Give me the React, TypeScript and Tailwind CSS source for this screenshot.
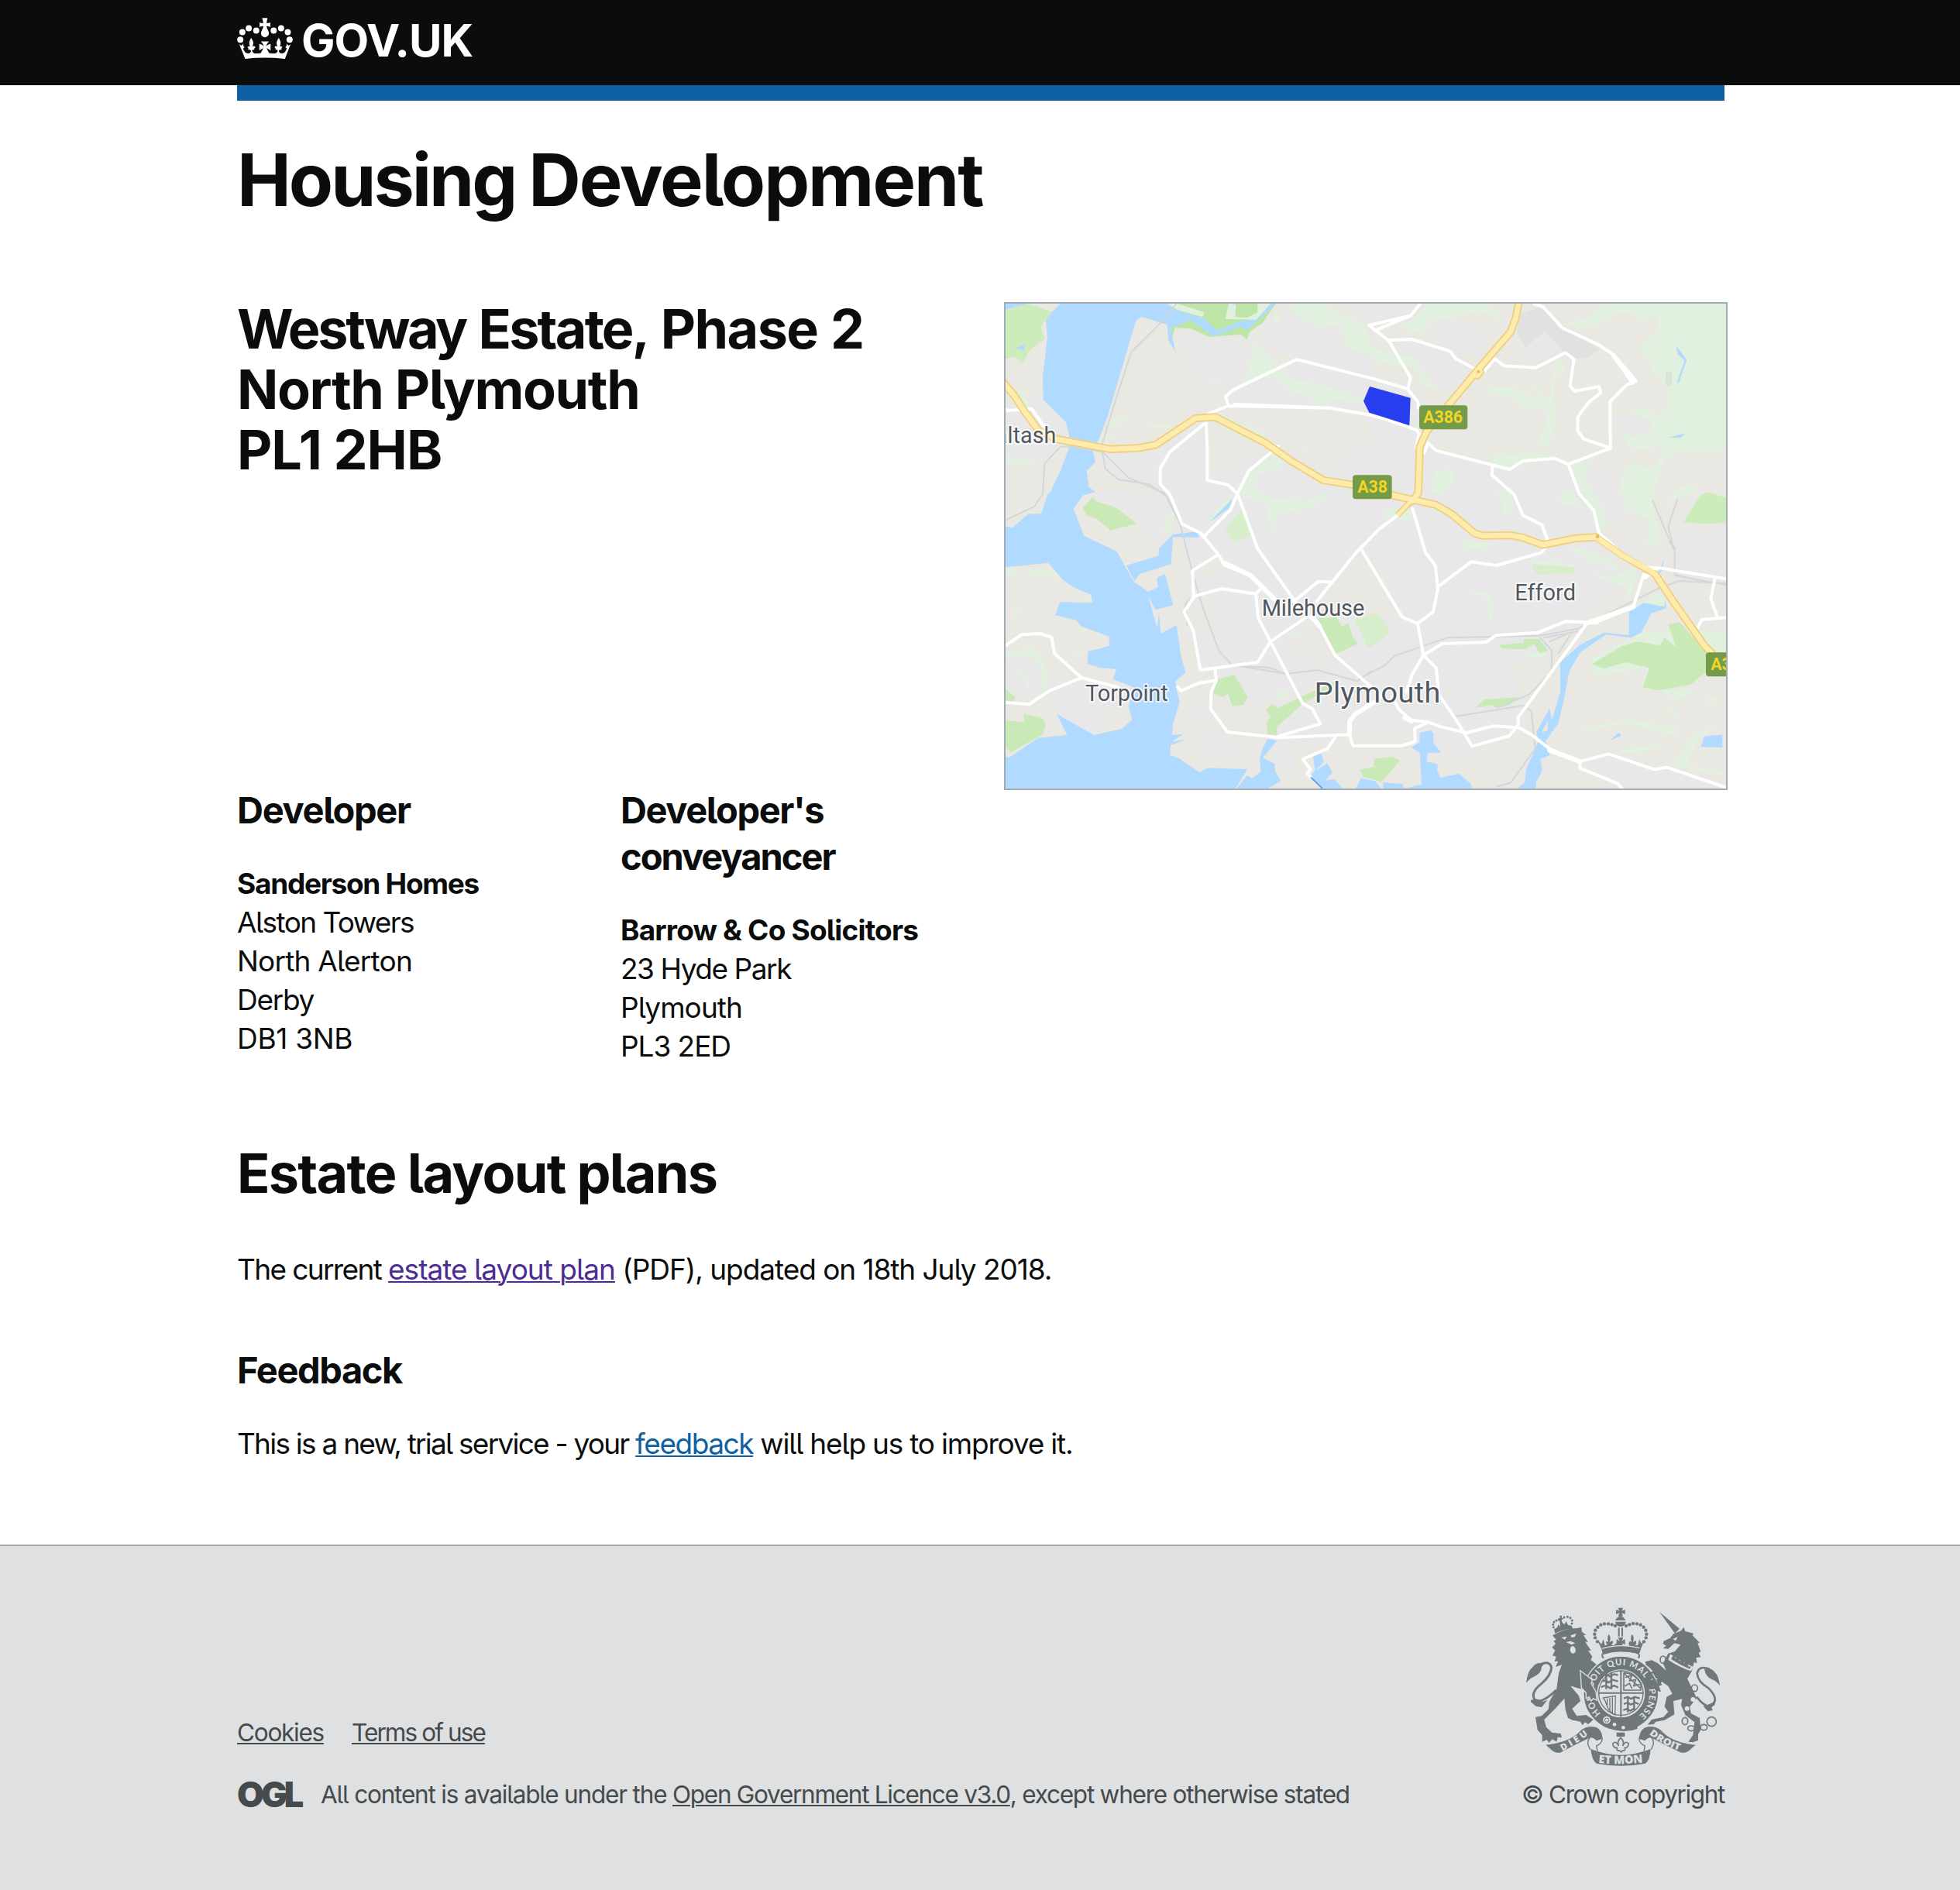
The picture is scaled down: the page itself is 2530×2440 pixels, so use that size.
const FONT = "font-['Inter','Liberation_Sans',sans-serif] [font-feature-settings:'cv05']";

function Crown() {
  return (
    <svg viewBox="48 68 216 160" className="h-[53px] w-[72px]" fill="#fff">
      {[[60, 153], [68, 124], [93, 109], [122, 118], [190, 118], [219, 109], [245, 124], [252, 153]].map(([x, y]) => (
        <circle key={x} cx={x} cy={y} r={12} />
      ))}
      <path d="M145 69H166L162 88Q170 90 177 85V105Q169 99 162 101Q163 108 168 116Q174 128 169 137Q163 144 156 144Q148 144 143 137Q138 128 144 116Q149 108 150 101Q142 99 135 105V85Q142 90 150 88Z" />
      <path d="M56 171L64 177 72 168Q70 178 77 183L71 187Q76 205 90 207Q101 206 102 196Q96 190 91 193Q94 187 88 182Q91 178 98 179Q92 166 97 156L102 146 108 156Q114 166 107 179Q116 177 119 183Q113 187 114 193Q108 190 106 196Q109 207 120 207Q130 207 140 205L150 186 134 195V169Q144 172 152 178Q149 168 140 160H172Q163 168 160 178Q168 172 178 169V195L162 186 172 205Q182 207 194 207Q203 206 206 196Q204 190 198 193Q199 187 193 183Q196 177 205 179Q198 166 204 156L210 146 215 156Q220 166 214 179Q221 178 224 182Q218 187 221 193Q216 190 210 196Q211 206 222 207Q236 205 241 187L235 183Q242 178 240 168L248 177 256 171L234 228Q156 219 79 228Z" />
    </svg>
  );
}

const SHIELDS = [
  { x: 1368, y: 700, w: 152, label: "A38", tx: 1387, tw: 116 },
  { x: 1626, y: 430, w: 187, label: "A386", tx: 1642, tw: 152 },
  { x: 2736, y: 1387, w: 152, label: "A38", tx: 2755, tw: 116 },
];

const LABELS = [
  { text: "Saltash", x: -67, y: 575, size: 86, w: 287 },
  { text: "Torpoint", x: 333, y: 1575, size: 87, w: 320 },
  { text: "Milehouse", x: 1016, y: 1245, size: 87, w: 398 },
  { text: "Efford", x: 1996, y: 1186, size: 87, w: 236 },
  { text: "Plymouth", x: 1220, y: 1580, size: 113, w: 488 },
];

/* Land, coast and water outlines, in units of a third of a pixel. */
function MapLand() {
  return (
    <>
      <rect x="0" y="0" width="2850" height="1950" fill="#eae8e2" />
      <g fill="#e8e8e8">
        <path d="M24 440L150 405 170 410 258 495 262 590 235 600 175 660 24 640Z" />
        <path d="M690 165L760 145 880 180 980 215 960 320 870 380 780 350 725 280Z" />
        <path d="M400 605L610 590 760 490 800 500 805 690 860 690 960 640 1100 600 1250 700 1440 560 1410 440 890 440 876 396 1150 255 1440 320 1590 366 1630 440 1620 560 1700 610 1980 680 2200 650 2330 930 2330 1000 2430 1120 2260 1240 2080 1400 2000 1500 2060 1650 1990 1700 1800 1790 1600 1790 1590 1700 1350 1710 1140 1750 1140 1880 1070 1820 1050 1720 880 1690 850 1480 770 1450 745 1220 750 1080 620 740 460 717Z" />
        <path d="M1020 200L1040 90 1150 60 1250 140 1330 130 1330 210 1440 240 1440 320 1150 240Z" />
        <path d="M370 775L450 750 600 780 690 870 640 930 580 955 530 890Z" />
        <path d="M190 1540L315 1490 520 1522 500 1595 410 1620 410 1690 367 1707 222 1625Z" />
        <path d="M40 1420H160L180 1560 40 1540Z" />
        <path d="M790 1690L900 1720 925 1790 860 1820 800 1780Z" />
        <path d="M700 1640L760 1560 830 1600 850 1650Z" />
      </g>
      <g fill="#e8e8e8" transform="translate(1410 0)">
        <path d="M-60 36H210L180 80 20 120Z" />
        <path d="M110 185L190 175 330 222 430 290 345 385 290 370 240 290 200 240Z" />
        <path d="M280 100L380 95 470 160 440 240 330 215 280 170Z" />
        <path d="M950 480L1060 450 1120 500 1060 560 990 530Z" />
        <path d="M860 670L960 700 1030 830 1000 880 930 870Z" />
        <path d="M900 60L990 45 960 80 850 125 790 110Z" />
        <path d="M1210 920L1404 915V1100L1210 1080Z" />
        <path d="M700 145L790 240 640 240 600 225Z" />
        <path d="M838 1815L950 1790 1404 1905V1913H990Z" />
      </g>
      <g fill="#eae8e2">
        <path d="M745 1070L850 1010 905 1060 800 1100ZM770 1190L830 1170 850 1310 760 1320Z" />
        <path d="M1100 1340L1230 1270 1300 1398 1230 1430 1160 1410ZM1290 1115L1450 990 1560 1240 1230 1240Z" />
        <path d="M960 1590L1040 1570 1040 1700 880 1690 860 1620ZM1970 1440L2080 1420 2090 1480 1980 1500Z" />
      </g>
      <path fill="#e1e1e1" d="M2015 80L2100 45 2180 130 2325 212 2270 250 2210 245 2110 145 2040 205 2005 150Z" />
      <g fill="#e2f0df">
        <path d="M50 368L90 372 125 450 60 440Z" />
        <path d="M24 627L122 640 118 668 24 650Z" />
        <path d="M425 490L490 468 488 482 415 525Z" />
        <path d="M405 530L445 560 390 572Z" />
        <path d="M560 508L665 506 668 518 560 516Z" />
        <path d="M968 180L1040 225 1065 270 1120 310 1125 328 1250 350 1340 385 1440 405V430L1275 400 1270 435 1220 432 1210 400 1120 375 1080 325 1020 320 900 375 960 320 980 215Z" />
        <path d="M822 335L860 325 828 362Z" />
        <path d="M1140 36H1260L1330 85 1420 120 1440 230 1400 225 1335 200 1330 130 1290 115 1250 135 1140 70Z" />
        <path d="M1075 62L1090 105 1060 105Z" />
        <path d="M880 480L1000 520 1080 590 1040 590 935 550 870 520Z" />
        <path d="M1070 600L1110 620 1080 680 985 700 1020 720 970 730 1050 790 1180 800 1270 770 1260 795 1200 825 1070 855 1068 920 1040 880 1040 815 950 785 925 770 965 685Z" />
        <path d="M1175 588L1195 585 1185 620Z" />
        <path d="M900 790L820 888 805 880 880 800Z" />
        <path d="M690 830L660 920 630 925 655 860Z" />
        <path d="M24 1065L70 1060 70 1090 24 1085ZM110 1065H210L245 1112 200 1090 110 1088ZM310 1185L350 1165 358 1190Z" />
        <path d="M55 1225L90 1222 50 1255ZM310 1288L360 1312 310 1302ZM285 1382L335 1380 335 1395 285 1393Z" />
        <path d="M24 1395L130 1362 180 1440 185 1560 165 1540 160 1440 120 1400 24 1410ZM45 1465L100 1470 125 1520 110 1525 90 1485Z" />
        <path d="M1075 1545L1115 1530 1118 1555 1085 1572ZM1110 1320L1160 1308 1158 1325Z" />
      </g>
      <g fill="#e2f0df" transform="translate(1410 0)">
        <path d="M930 36H1404V605H1220L1165 640 1145 700 1120 790 1125 860 1155 940 1130 970 1095 980 1110 870 1020 840 990 720 1040 655 1120 680 1165 610 1150 580 1100 600 1030 595 990 530 1060 560 1120 520 1110 490 1035 455 1095 438 1130 475 1180 430 1175 340 1110 295 1125 260 1078 225 1085 190 1145 140 1138 88 1095 85 1075 120 1050 75 980 72 860 135 770 112 860 95Z" />
        <path d="M250 36H480L540 98 440 65 330 95 250 90 240 155 150 130Z" />
        <path d="M0 190L100 230 190 240 240 310 285 375 230 350 200 285 60 260 0 220Z" />
        <path d="M745 235L785 295 745 310 735 420 750 480 710 600 675 560 710 510 715 445 620 445 590 400 490 385 480 355 600 365 680 415 650 320 690 390 720 400Z" />
        <path d="M505 618L600 622 640 605 690 618 740 625 660 640 618 645 566 678 500 660ZM793 658L905 625 860 670 870 740 930 820 945 920 900 880 835 772Z" />
        <path d="M285 680L350 675 350 725 300 780 255 760ZM510 750L570 760 575 830 535 865 545 810ZM770 750L830 790 860 830 760 810ZM90 830L190 840 180 878 80 865Z" />
        <path d="M370 950L480 960 490 990 400 985ZM1210 750L1280 735 1290 760 1200 800 1170 860Z" />
        <path d="M700 1030L820 1050 815 1080 610 1032ZM780 970L900 1000 1000 1060 960 1055 850 1020ZM855 1080L960 1095 1060 1050 1050 1120 1030 1190 1010 1130 930 1105Z" />
        <path d="M410 1155L485 1155 505 1230 490 1275 475 1170 410 1168ZM620 1392L710 1390 700 1405 630 1405Z" />
        <path d="M880 1410L1080 1310 1270 1300 1404 1310V1380L1300 1480 1140 1535 1270 1530 1265 1550 1210 1572 1140 1535 1075 1525 1100 1450 890 1475Z" />
        <path d="M850 1680L1030 1645 1210 1680 1225 1715 1030 1660 850 1690ZM980 1770L1180 1735 1100 1765 980 1785ZM1200 1825L1280 1700 1404 1665 1300 1715 1250 1825 1404 1850V1865L1240 1835ZM1160 1590L1210 1610 1215 1645ZM1285 1575L1370 1560 1370 1580Z" />
        <path d="M1070 1190L1165 1150 1165 1210Z" />
      </g>
      <g fill="#c9e9b6">
        <path d="M24 62L110 36 205 68 160 125 176 172 118 215 90 266 62 242 24 250Z" fill="#cdecbb" />
        <path d="M680 36H1070L1020 110 970 145 958 176 935 155 815 165 740 132 680 130 662 190 650 118 560 90 545 85Z" fill="#bde5a8" />
        <path d="M648 36H690L795 70 788 88 690 60ZM888 36L916 38 914 88 960 90 1000 70V36H1062L995 98 875 95Z" fill="#e2f0df" />
        <path d="M363 782L372 800 450 825 533 888 430 914 378 870 340 858 322 828Z" />
        <path d="M940 830L975 935 905 960 875 905Z" fill="#d6eecb" />
        <path d="M24 1530L62 1560 55 1580 24 1575ZM24 1650L98 1658 93 1625 165 1640 180 1668 165 1708 45 1772 24 1755Z" />
        <path d="M830 1495L910 1473 962 1560 945 1590 903 1596 885 1545 865 1560 828 1545Z" />
        <path d="M1055 1585L1075 1603 1230 1530 1300 1500 1290 1520 1175 1585 1075 1675 1075 1708 1040 1705 1033 1660 1052 1637 1033 1610Z" />
        <path d="M1232 1255L1305 1250 1325 1285 1352 1275 1370 1330 1390 1352 1303 1392Z" />
        <path d="M1375 1262L1455 1235 1490 1260 1512 1315 1430 1370Z" fill="#d6eecb" />
        <path d="M1395 1842L1450 1830 1450 1800 1520 1790 1552 1805 1480 1888 1410 1868Z" />
      </g>
      <g fill="#c9e9b6" transform="translate(1410 960)">
        <path d="M652 92L660 85 818 98V122L672 125Z" fill="#d6eecb" />
        <path d="M522 398L620 390 620 375 680 374 715 420 680 428 662 392 630 415 540 412ZM432 642L470 608 612 600 560 632 512 643 500 630Z" />
        <path d="M885 472L1000 403 1060 385 1150 400 1165 370 1210 405 1180 318 1225 310 1330 430V500L1265 552 1140 574 1082 562 1107 487 1015 465 930 490Z" />
        <path d="M1240 -78L1305 -183 1340 -193 1404 -173V-76L1320 -71Z" fill="#cdecbb" />
      </g>
      <g fill="#b0daff">
        <path d="M24 36H110L24 60ZM235 36L205 68 180 100 186 165 168 320 170 408 258 495 270 548 268 600 238 680 195 770 188 772 162 850H112L52 903 24 898V1057L190 1040 245 1105 285 1133 355 1163 360 1195 234 1192 217 1243 300 1263 315 1285 425 1325V1362L343 1383 341 1430 385 1445 453 1452 440 1490 520 1522 500 1595 514 1647 475 1682 367 1707 222 1625 262 1707 150 1718 40 1793 24 1792V1913H915L960 1840 808 1834 775 1851 697 1798 661 1785 663 1747 720 1725 668 1732 712 1704 668 1706 672 1665 698 1580 680 1500 721 1465 703 1400 686 1280 626 1314 618 1235 611 1292 575 1165 605 1222 673 1204 642 1083 610 1097 614 1135 576 1152 520 1112 455 997 380 960 328 935 287 830 325 778 372 765 347 747 338 685 372 650 360 600 382 568 420 470 470 300 530 98 555 86 650 118 655 180 682 222 662 130 740 100 830 162 930 125 960 138 1070 36H1050L995 98 930 105 845 142 795 95 690 62 650 36Z" />
        <path d="M492 1050L617 1012V985L672 930 768 918 772 942 672 940 665 1045 545 1082 522 1110ZM62 208L102 193 95 219ZM810 885L905 790 890 828Z" />
        <path d="M1040 1722L1075 1728 1020 1795 1065 1818 1068 1848 1090 1885 1040 1913H920L960 1862 978 1874 1012 1850 1008 1800 1020 1755Z" />
        <path d="M1215 1788L1245 1778 1257 1810 1225 1845 1270 1816 1290 1852 1262 1882 1298 1878 1328 1913H1250L1205 1865 1222 1843ZM1380 1913L1400 1875 1455 1885 1478 1913ZM1486 1890L1562 1897 1566 1913H1486Z" />
      </g>
      <g fill="#b0daff" transform="translate(1410 960)">
        <path d="M218 738L262 728 272 745 270 775 300 815H250L245 850 288 860 285 885 298 912 370 897 415 935 420 953H160L225 938 218 815 185 795 218 775Z" />
        <path fillRule="evenodd" d="M598 953L625 930 630 880 665 800 678 765 670 735 720 645 730 690 762 580V465L835 400 930 350 1028 360V270L1085 235 1165 250 1170 225 1172 255 1115 275 1075 350 1035 370 940 358 840 425 797 500 778 600 755 700 705 770 722 825 685 840 692 885 668 930V953ZM715 690L690 735 712 730Z" />
        <path d="M1165 65L1135 132 1155 112ZM955 767L990 737 998 750ZM1320 752L1390 745V795L1307 793ZM1210 -762L1252 -705 1220 -615 1215 -620 1243 -703 1218 -728ZM1183 -405L1248 -423 1225 -404Z" />
      </g>
      <rect x="2580" y="300" width="24" height="54" fill="#dae6d5" />
    </>
  );
}

function MapLines() {
  return (
    <g fill="none" strokeLinejoin="round" strokeLinecap="round">
      <g stroke="#d4d7da" strokeWidth="6">
        <path d="M685 36L640 95 510 225 450 410 395 590 410 675 460 717 580 735 650 785 700 890 750 1085 790 1220 850 1380 900 1435 1110 1470 1230 1455 1385 1498 1440 1460" />
        <path d="M24 875L135 822 168 775 175 655 235 592 262 588 400 610 500 710 640 770 690 870M910 1440L1040 1445 1110 1470M735 1180L720 1200 728 1280" />
        <g transform="translate(1410 960)">
          <path d="M0 520L85 475 120 440 325 370 680 362 830 335 1140 180 1220 150 1404 160M355 675L620 632 650 655 665 800 570 932 520 945M680 365L730 420 728 490M760 470L640 590 520 640M700 370L830 345M720 385L800 350M755 430L800 360M1185 0L1205 20V125L1330 155M1210 130L1404 165M1120 -160L1200 25M1215 -165L1180 -60 1200 20" />
        </g>
      </g>
      <g stroke="#fff" strokeWidth="12">
        <path d="M24 447L35 450 125 443 175 515M810 462L885 432 1280 440 1440 468 1500 485 1615 525 1630 545M910 425L1280 440M887 430L876 396 905 370 1152 252 1440 325 1582 366" />
        <path d="M800 490L805 600V720L885 738 922 772 1000 985 1145 1190M1080 588L965 685 922 772 895 835 790 940M795 500L660 610 623 675V735L660 775 708 890 780 925 850 1010 870 1048 975 1090 1070 1180" />
        <path d="M845 1010L748 1070 752 1170 860 1140 993 1160 1015 1138M752 1175L715 1230 752 1305 778 1455 1000 1425 1050 1345 1190 1250M993 1160L1003 1255 1050 1345 1175 1585 1212 1605 1243 1663 1080 1712" />
        <path d="M835 1450L840 1495 820 1540 818 1605 883 1695 1085 1717 1355 1705 1370 1748H1560L1610 1732 1608 1682 1655 1660" />
        <path d="M690 1520L703 1535 775 1505 840 1495M24 1360L85 1318 157 1314 202 1328 213 1390 318 1485 460 1522M24 1580L115 1588 195 1535 318 1485" />
        <path d="M1140 1190L1235 1112 1290 1115M1228 1190L1380 1002 1470 910 1540 857M1210 1250L1235 1275 1300 1398 1440 1520 1480 1560M1400 985L1560 1250 1620 1275 1680 1230 1698 1140 1688 1050 1650 1000 1600 830" />
        <path d="M1300 1717L1270 1760 1175 1800 1205 1840 1192 1855 1208 1872" />
        <g transform="translate(1410 0)">
          <path d="M220 36L183 82 22 120 98 180 182 322 172 368 212 418V440M45 140L183 82M98 178L187 174 335 220 358 250 435 290" />
          <path d="M470 295L508 250 545 277 667 284 783 226 815 252 800 355 818 375 912 357 918 382 870 420 830 475V530L853 560 958 596" />
          <path d="M660 36L695 48 770 130 910 195 970 235 1055 335 1020 350 955 415 956 596 793 658 740 635 618 645 566 678 280 605 250 575 235 615M970 235L1040 345 1055 335M215 540L205 590" />
          <path d="M500 665L497 700 583 775 618 857 690 892 718 965 690 1000 515 1050 417 1036 288 1132M793 658L835 772 892 837 912 925 985 990" />
        </g>
        <g transform="translate(1410 960)">
          <path d="M210 315L232 437 282 488 292 590 360 690 420 790 565 750 600 705 598 680 865 315 905 308 1045 250 1085 125M232 437L190 510 165 580M232 437L305 393 475 387 512 361 675 350 782 307 905 312" />
          <path d="M110 600L140 650 185 690 245 695 300 715 400 738 500 712 600 718 650 745 720 800 835 850 950 820 1125 880 1175 872 1404 950M838 850V875L985 935 1000 953" />
          <path d="M1085 97L1145 100 1404 142M1360 145L1345 218 1370 290M1404 292L1310 300 1290 340" />
        </g>
      </g>
      <g stroke="#fff" strokeWidth="18">
        <path d="M1450 1580L1375 1628 1356 1655V1705M870 1040L975 1090 1065 1180M1210 1250L1240 1285M2270 1275L2455 1210M2500 1095L2540 1065" />
        <path d="M2130 1765L2245 1808M1570 1640L1596 1652M2380 240L2450 330" />
      </g>
      <g stroke="#f0d07c" strokeWidth="31">
        <path d="M10 335L60 395 95 450 150 525 220 560 430 600 540 595 605 583 760 480 835 475 1030 575 1130 645 1255 720 1370 738 1520 778 1600 795 1690 815 1750 850 1840 925 1870 935 1980 933 2030 943 2105 970 2230 945 2310 940" />
        <path d="M2012 30L2000 90 1980 145 1855 290 1755 410 1655 530 1628 590 1622 770 1600 800M1862 300L1850 315M2540 1085L2610 1190 2730 1360 2760 1390" />
      </g>
      <path stroke="#f0d07c" strokeWidth="24" strokeLinecap="butt" d="M1600 795L1541 856" />
      <path stroke="#f0d07c" strokeWidth="26" d="M2310 940L2410 1010 2540 1085" />
      <g stroke="#fdecae" strokeWidth="20">
        <path d="M10 335L60 395 95 450 150 525 220 560 430 600 540 595 605 583 760 480 835 475 1030 575 1130 645 1255 720 1370 738 1520 778 1600 795 1690 815 1750 850 1840 925 1870 935 1980 933 2030 943 2105 970 2230 945 2310 940 2410 1010 2520 1070 2540 1085 2610 1190 2730 1360 2760 1390" />
        <path d="M2012 30L2000 90 1980 145 1855 290 1755 410 1655 530 1628 590 1622 770 1600 800M1862 300L1850 315" />
      </g>
      <path stroke="#fdecae" strokeWidth="14" strokeLinecap="butt" d="M1600 795L1541 856" />
      <circle cx="1855" cy="299" r="6" fill="#e7bd57" />
      <circle cx="2316" cy="938" r="7" fill="#e7bd57" />
      <path stroke="#6f9ee8" strokeWidth="6" d="M1208 1872L1250 1913" />
    </g>
  );
}

function EstateMap() {
  return (
    <svg viewBox="24 36 2790 1878" className="block h-[626px] w-[930px]" fontFamily="Roboto, sans-serif">
      <MapLand />
      <MapLines />
      <path fill="#293fef" d="M1410 413L1434 357 1592 401 1588 508 1432 458Z" />
      {SHIELDS.map((s) => (
        <g key={s.x}>
          <rect x={s.x} y={s.y} width={s.w} height="93" rx="12" fill="#739b4a" />
          <text x={s.tx} y={s.y + 69} textLength={s.tw} fontSize="64" fontWeight="700" fill="#f2d626">{s.label}</text>
        </g>
      ))}
      {LABELS.map((l) => (
        <text key={l.text} x={l.x} y={l.y} textLength={l.w} fontSize={l.size} fill="#50575f" stroke="#fff" strokeOpacity="0.75" strokeWidth="12" strokeLinejoin="round" paintOrder="stroke">{l.text}</text>
      ))}
    </svg>
  );
}

const CROWN_BEADS = [[366, 178], [357, 163], [355, 149], [358, 134], [367, 122], [379, 113], [393, 109], [408, 109], [422, 112], [435, 117], [477, 117], [490, 112], [504, 108], [519, 109], [533, 113], [545, 122], [553, 134], [556, 149], [554, 163], [546, 178]];
const LION_BEADS = [[196, 122], [194, 112], [198, 102], [207, 96], [217, 93], [237, 84], [250, 82], [261, 86], [268, 96], [267, 108]];

function Crest() {
  return (
    <svg viewBox="90 45 750 618" className="h-[206px] w-[250px]" fill="#6f777b">
      {/* royal crown */}
      {CROWN_BEADS.map(([x, y]) => <circle key={`${x}-${y}`} cx={x} cy={y} r="6.5" />)}
      <path d="M446 47H465L460 59 473 54V72L460 67 465 80H446L451 67 438 72V54L451 59ZM435 96Q440 82 455 80Q470 82 475 96ZM435 101H476Q474 118 455 120Q437 118 435 101ZM446 124H452V158H446ZM459 124H465V158H459Z" />
      <path d="M366 172L382 188 388 168 394 190Q398 196 404 190 396 182 402 176L408 180Q402 160 410 150Q420 160 413 180L424 174Q430 182 420 190Q428 196 434 188L440 184V168L452 176 446 162H466L460 176 473 168V190L460 184 466 194H490Q484 182 492 176L498 180Q492 160 500 150Q510 160 504 180L514 174Q520 184 512 190Q520 196 524 188L528 168 536 186 548 172 534 206Q532 220 526 226Q455 206 388 228Q384 216 382 208Z" />
      <path d="M384 205Q455 184 530 203" fill="none" stroke="#dee0e2" strokeWidth="4" />
      <path d="M390 242Q376 226 396 220Q455 206 516 220Q536 228 524 242" fill="none" stroke="#6f777b" strokeWidth="6" />

      {/* lion */}
      {LION_BEADS.map(([x, y]) => <circle key={`${x}-${y}`} cx={x} cy={y} r="4.5" />)}
      <path d="M219 78L228 77 227 86 236 88 227 94 230 104 238 112 245 100 252 114 266 116 271 128Q236 128 202 146L198 130 210 124 214 112 222 120 220 96 214 88 222 86Z" />
      <path d="M192 154Q240 126 288 126L304 122 306 140 322 152 312 154 330 180 318 178 342 214 330 212 346 236 340 248 366 270 352 280 350 296 336 320 342 330 336 352 306 362 270 352 262 350 294 388 300 408 268 438 286 466 322 462 350 480 340 490 330 498 318 490 308 502 300 488 270 482 252 474 242 442 238 398 200 440 160 480 168 510 190 530 224 534 228 550 212 548 208 566 192 556 178 570 170 558 152 566 152 540 134 520 126 470 150 466 176 440 180 410 208 360 216 300 228 268 204 276 214 254 200 254 206 236 192 232 202 212 190 200 204 186 196 176 206 170Z" />
      <path d="M146 266Q180 250 188 278Q186 310 150 340Q104 376 124 404Q150 420 206 366" fill="none" stroke="#6f777b" strokeWidth="9" />
      <path d="M160 264Q130 254 114 278 96 290 90 338 106 318 120 314 150 300 150 276ZM108 404L130 400 156 410 172 404 150 432 128 428 108 412Z" />
      <g fill="#dee0e2">
        <path d="M226 162L248 158 240 170ZM262 154L284 146 278 160 266 162Z" />
        <path d="M262 200Q272 188 280 204Q286 222 270 224Q256 218 262 200ZM244 180L262 176 280 184 266 190Z" />
      </g>

      {/* unicorn */}
      <path d="M606 63L684 128 666 146Z" />
      <path d="M660 148L690 136 700 122 706 138 738 146 734 154 762 182 754 184 766 216 758 222 766 238 748 240 752 262 740 258 732 292 714 322 728 350 750 396 724 430 728 456 762 474 766 520 756 536 756 560 736 568 718 566 736 540 742 490 706 462 690 424 694 400 660 408 664 460 626 482 592 488 584 498 560 500 576 480 622 470 640 450 626 430 634 392 656 380 640 350 616 334 600 342 610 372 590 366 584 346 586 330 600 322 570 316 550 340 546 316 570 300 592 294 556 270 550 256 576 250 600 262 632 290 620 262 640 224 666 216 688 190 664 184 640 206 620 204 632 194 620 186 622 176 648 164Z" />
      <path d="M648 226Q690 256 738 276L728 292Q680 276 640 248Z" fill="#dee0e2" />
      <path d="M656 236L664 232 668 244 678 240 684 252 696 248 702 262 712 258 720 276 728 272 724 284Q684 268 652 246Z" />
      <path d="M658 168L676 160 670 174Z" fill="#dee0e2" />
      <path d="M800 284Q758 268 752 302Q756 336 796 358Q838 400 810 424Q788 440 750 392" fill="none" stroke="#6f777b" strokeWidth="8" />
      <path d="M780 284Q806 276 820 296 836 310 840 348 824 328 808 324 784 312 780 284ZM776 428L800 420 822 408 820 424 808 432 812 444 794 448Z" />
      <g fill="none" stroke="#6f777b" strokeWidth="5">
        <ellipse cx="620" cy="248" rx="11" ry="14" /><ellipse cx="742" cy="358" rx="12" ry="13" /><ellipse cx="705" cy="486" rx="11" ry="14" />
        <ellipse cx="729" cy="514" rx="13" ry="10" /><ellipse cx="778" cy="510" rx="13" ry="11" /><circle cx="808" cy="488" r="18" />
      </g>
      <g fill="#dee0e2"><circle cx="736" cy="402" r="9" /><circle cx="713" cy="437" r="9" /></g>

      {/* garter and shield */}
      <circle cx="457" cy="379" r="147" fill="#dee0e2" />
      <circle cx="457" cy="379" r="118" fill="none" stroke="#6f777b" strokeWidth="50" />
      <circle cx="457" cy="377" r="86" fill="none" stroke="#6f777b" strokeWidth="4" />
      <defs>
        <path id="garter" d="M379 457A110 110 0 0 1 457 269A110 110 0 0 1 519 470" />
        <path id="motto-left" d="M230 602Q290 572 336 534" />
        <path id="motto-mid" d="M370 648Q456 656 544 646" />
        <path id="motto-right" d="M566 536Q620 580 696 604" />
      </defs>
      <text fontFamily="Lato, sans-serif" fontWeight="700" fontSize="34" fill="#dee0e2"><textPath href="#garter" textLength="530">HONI SOIT QUI MAL Y PENSE</textPath></text>
      <path d="M300 290L346 326 342 340 360 372 364 406 350 398 342 408 334 392 322 398 322 376 304 358Z" stroke="#dee0e2" strokeWidth="4" />
      <path d="M556 270L600 296 568 304 566 330 590 322 598 340 610 334 616 346 604 350 612 372 590 366 578 340 556 344 556 310 580 292 550 262Z" />
      <path d="M370 377H545M457 290V470" stroke="#6f777b" strokeWidth="6" />
      <g stroke="#6f777b" strokeWidth="7" fill="none" strokeLinejoin="round">
        <path d="M396 312L404 306 416 314 430 304 446 308M386 332L396 328 410 336 424 326 446 332M380 354L398 348 414 358 430 348 446 356M420 296V362M400 312V362" />
        <path d="M468 398L484 392 496 400 510 392 530 398M468 420L482 414 496 422 512 414 526 420M466 444L480 438 494 446 506 438 514 442M484 390V452M508 390V442" />
        <path d="M468 300L534 360M474 316L500 308 490 330 514 326 506 350 530 344M472 350L490 340 500 360M468 298V366H534V336M468 298Q510 300 534 340" strokeWidth="5" />
        <path d="M388 396L436 388 434 462Q408 448 402 424Q398 406 388 396ZM404 398V424M414 396V444M424 394V454" strokeWidth="4" />
      </g>
      <path d="M392 478Q450 514 524 492L520 516Q458 540 388 502Z" />
      <circle cx="402" cy="482" r="17" fill="#dee0e2" stroke="#6f777b" strokeWidth="5" />
      <circle cx="402" cy="482" r="8" fill="none" stroke="#6f777b" strokeWidth="3" />
      <g fill="#dee0e2"><circle cx="432" cy="499" r="7" /><circle cx="466" cy="511" r="7" /></g>

      {/* motto scroll */}
      <path d="M166 578Q260 570 304 520Q330 500 362 510Q384 520 386 554L362 562Q350 548 338 550Q290 572 222 608Q200 612 180 590Z" />
      <path d="M746 578Q652 570 610 520Q584 500 552 510Q530 520 526 554L550 562Q562 548 574 550Q622 576 690 608Q712 612 732 590Z" />
      <path d="M340 594Q456 640 572 594Q570 636 552 650Q456 668 362 650Q344 636 340 594Z" />
      <path d="M338 548Q320 566 338 596M386 554Q380 576 362 582L366 602M574 548Q592 566 574 596M526 554Q532 576 550 582L546 602" fill="none" stroke="#6f777b" strokeWidth="4" />
      <path d="M440 530H472V546H440Z" />
      <path d="M456 550Q472 566 464 582Q474 560 486 572Q488 588 472 590Q476 602 462 600Q458 612 452 600Q438 602 442 590Q424 588 426 572Q438 560 448 582Q440 566 456 550Z" fill="none" stroke="#6f777b" strokeWidth="5" />
      <g fontFamily="Open Sans, sans-serif" fontWeight="800" fill="#dee0e2">
        <text fontSize="36"><textPath href="#motto-left" textLength="118">DIEU</textPath></text>
        <text fontSize="44"><textPath href="#motto-mid" textLength="172" lengthAdjust="spacingAndGlyphs">ET MON</textPath></text>
        <text fontSize="36"><textPath href="#motto-right" textLength="134" lengthAdjust="spacingAndGlyphs">DROIT</textPath></text>
      </g>
    </svg>
  );
}

export default function App() {
  return (
    <div className={`flex min-h-[2440px] flex-col bg-white text-[#0b0c0c] ${FONT}`}>
      <header className="h-[110px] bg-[#0b0c0c]">
        <div className="ml-[306px] flex w-[1920px] pt-[23px]">
          <Crown />
          <span className="ml-[11px] -mt-px text-[58px] font-bold leading-[60px] tracking-[-1px] text-white">GOV.UK</span>
        </div>
      </header>
      <main className="ml-[306px] w-[1920px] grow">
        <div className="h-5 bg-[#0e60a5]" />
        <h1 className="mt-[52px] text-[93.5px] font-bold leading-[100px] tracking-[-2.4px]"><span className="tracking-[-3px]">Housing</span> <span className="-ml-[3px] tracking-[-2px]">Development</span></h1>
        <div className="mt-[104px] flex">
          <div className="w-[990px]">
            <h2 className="h-[630px] text-[70px] font-bold leading-[78px]">
              <span className="tracking-[-3.3px]">Westway</span> <span className="tracking-[-2.8px]">Estate,</span> <span className="tracking-[-1.6px]">Phase</span> <span>2</span><br />
              <span className="tracking-[-1.4px]">North Plymouth</span><br />
              <span className="tracking-[-1px]">PL1 2HB</span>
            </h2>
            <div className="flex text-[37px] leading-[50px]">
              <section className="w-[495px]">
                <h3 className="mb-10 text-[47px] font-bold leading-[60px] tracking-[-1.3px]">Developer</h3>
                <p className="font-bold tracking-[-1.28px]">Sanderson Homes</p>
                <p className="tracking-[-1.58px]">Alston Towers</p>
                <p className="tracking-[-0.77px]">North Alerton</p>
                <p className="tracking-[-1.3px]">Derby</p>
                <p className="tracking-[-0.3px]">DB1 3NB</p>
              </section>
              <section className="w-[495px]">
                <h3 className="mb-10 text-[47px] font-bold leading-[60px]"><span className="tracking-[-1.4px]">Developer's</span><br /><span className="tracking-[-2px]">conveyancer</span></h3>
                <p className="font-bold tracking-[-0.82px]">Barrow &amp; Co Solicitors</p>
                <p className="tracking-[-1.45px]">23 Hyde Park</p>
                <p className="tracking-[-0.92px]">Plymouth</p>
                <p className="tracking-[-1.05px]">PL3 2ED</p>
              </section>
            </div>
          </div>
          <div className="mt-[4px] h-[630px] w-[934px] shrink-0 overflow-hidden border-2 border-[#a1acb2]"><EstateMap /></div>
        </div>
        <h2 className="mt-[100px] text-[70px] font-bold leading-[78px] tracking-[-1.7px]">Estate layout plans</h2>
        <p className="mt-[60px] text-[37px] leading-[50px]">
          <span className="whitespace-pre tracking-[-1.63px]">The current </span><a className="tracking-[-0.97px] text-[#4c2c92] underline decoration-2 underline-offset-2">estate layout plan</a><span className="whitespace-pre tracking-[-1.05px]"> (PDF), updated on 18th July 2018.</span>
        </p>
        <h3 className="mt-[75px] text-[47px] font-bold leading-[60px] tracking-[-1.4px]">Feedback</h3>
        <p className="mt-10 text-[37px] leading-[50px]">
          <span className="whitespace-pre tracking-[-1.76px]">This is a new, trial service - your </span><a className="tracking-[-1.45px] text-[#0e60a5] underline decoration-2 underline-offset-2">feedback</a><span className="whitespace-pre tracking-[-1.2px]"> will help us to improve it.</span>
        </p>
      </main>
      <footer className="h-[446px] border-t-2 border-[#a1acb2] bg-[#dee0e2] text-[31.5px] leading-10 text-[#454a4c]">
        <div className="ml-[306px] flex h-full w-[1920px] justify-between">
          <div className="pt-[221px]">
            <div className="flex gap-9">
              <a className="tracking-[-1.25px] underline decoration-2 underline-offset-2">Cookies</a>
              <a className="tracking-[-1.9px] underline decoration-2 underline-offset-2">Terms of use</a>
            </div>
            <div className="mt-10 flex">
              <span className="w-[108px] text-[45px] font-black tracking-[-4px]">OGL</span>
              <p>
                <span className="whitespace-pre tracking-[-1.19px]">All content is available under the </span><a className="tracking-[-1.27px] underline decoration-2 underline-offset-2">Open Government Licence v3.0</a><span className="whitespace-pre tracking-[-1.23px]">, except where otherwise stated</span>
              </p>
            </div>
          </div>
          <div className="flex flex-col items-end pt-[79px]">
            <div className="mr-[6px]"><Crest /></div>
            <p className="mt-[16px] tracking-[-1.36px]">© Crown copyright</p>
          </div>
        </div>
      </footer>
    </div>
  );
}
